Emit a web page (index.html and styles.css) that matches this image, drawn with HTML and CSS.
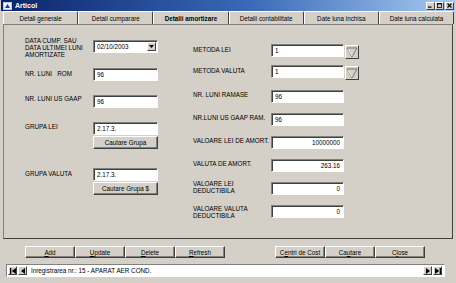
FILE: index.html
```html
<!DOCTYPE html>
<html>
<head>
<meta charset="utf-8">
<title>Articol</title>
<link rel="stylesheet" href="styles.css">
</head>
<body>
<div class="window">
  <div class="titlebar">
    <svg class="appicon" width="9" height="8" viewBox="0 0 9 8">
      <rect x="0.5" y="0.5" width="8" height="7" fill="#e8f0ff" stroke="#c0c8d8"/>
      <path d="M2 6 L4.5 2 L7 6 Z" fill="#1c3c8c"/>
      <rect x="1.5" y="1" width="2" height="2" fill="#ffffff"/>
    </svg>
    <span class="title">Articol</span>
    <div class="wincontrols">
      <span class="wbtn"><svg width="5" height="5" viewBox="0 0 5 5"><rect x="0" y="3.5" width="3.5" height="1.2" fill="#000"/></svg></span>
      <span class="wbtn"><svg width="5" height="5" viewBox="0 0 5 5"><rect x="0.5" y="0.5" width="4" height="4" fill="none" stroke="#000" stroke-width="0.8"/><rect x="0.5" y="0.4" width="4" height="1" fill="#000"/></svg></span>
      <span class="wbtn wbtn-close"><svg width="5" height="5" viewBox="0 0 5 5"><path d="M0.5 0.5 L4.5 4.5 M4.5 0.5 L0.5 4.5" stroke="#000" stroke-width="1.1"/></svg></span>
    </div>
  </div>

  <div class="tabs">
    <div class="tab">Detali generale</div>
    <div class="tab">Detali cumparare</div>
    <div class="tab active">Detalii amortizare</div>
    <div class="tab">Detalii contabilitate</div>
    <div class="tab">Date luna inchisa</div>
    <div class="tab">Date luna calculata</div>
  </div>

  <div class="page">
    <div class="col col-left">
      <div class="row">
        <div class="lbl lbl-left">DATA CUMP. SAU<br>DATA ULTIMEI LUNI<br>AMORTIZATE</div>
        <div class="combo combo-date">
          <span class="combo-val">02/10/2003</span>
          <span class="combo-btn"><svg width="5" height="3" viewBox="0 0 5 3"><path d="M0 0 H5 L2.5 3 Z" fill="#000"/></svg></span>
        </div>
      </div>
      <div class="row row-gap-10">
        <div class="lbl lbl-left lbl-off2">NR. LUNI &nbsp; ROM</div>
        <div class="field field-left">96</div>
      </div>
      <div class="row row-gap-14">
        <div class="lbl lbl-left">NR. LUNI US GAAP</div>
        <div class="field field-left">96</div>
      </div>
      <div class="row row-gap-14">
        <div class="lbl lbl-left lbl-off1">GRUPA LEI</div>
        <div class="stack">
          <div class="field field-left">2.17.3.</div>
          <button class="btn btn-search">Cautare Grupa</button>
        </div>
      </div>
      <div class="row row-gap-19">
        <div class="lbl lbl-left lbl-off2">GRUPA VALUTA</div>
        <div class="stack">
          <div class="field field-left">2.17.3.</div>
          <button class="btn btn-search">Cautare Grupa $</button>
        </div>
      </div>
    </div>

    <div class="col col-right">
      <div class="row">
        <div class="lbl lbl-right lbl-off2">METODA LEI</div>
        <div class="field field-right">1</div>
        <span class="dropbtn"><svg width="12" height="11" viewBox="0 0 12 11"><path d="M1 1 H11 L6 10 Z" fill="none" stroke="#7a7a7a" stroke-width="1"/><path d="M1.8 1.8 L6 9" stroke="#fff" stroke-width="0.8"/></svg></span>
      </div>
      <div class="row row-gap-6">
        <div class="lbl lbl-right lbl-off2">METODA VALUTA</div>
        <div class="field field-right">1</div>
        <span class="dropbtn"><svg width="12" height="11" viewBox="0 0 12 11"><path d="M1 1 H11 L6 10 Z" fill="none" stroke="#7a7a7a" stroke-width="1"/><path d="M1.8 1.8 L6 9" stroke="#fff" stroke-width="0.8"/></svg></span>
      </div>
      <div class="row row-gap-10">
        <div class="lbl lbl-right lbl-off1">NR. LUNI RAMASE</div>
        <div class="field field-right">96</div>
      </div>
      <div class="row row-gap-10">
        <div class="lbl lbl-right lbl-off1">NR.LUNI US GAAP RAM.</div>
        <div class="field field-right">96</div>
      </div>
      <div class="row row-gap-10">
        <div class="lbl lbl-right lbl-off1">VALOARE LEI DE AMORT.</div>
        <div class="field field-right num">10000000</div>
      </div>
      <div class="row row-gap-10">
        <div class="lbl lbl-right lbl-off1">VALUTA DE AMORT.</div>
        <div class="field field-right num">263.16</div>
      </div>
      <div class="row row-gap-10">
        <div class="lbl lbl-right lbl-up1">VALOARE LEI<br>DEDUCTIBILA</div>
        <div class="field field-right num">0</div>
      </div>
      <div class="row row-gap-10">
        <div class="lbl lbl-right">VALOARE VALUTA<br>DEDUCTIBILA</div>
        <div class="field field-right num">0</div>
      </div>
    </div>
  </div>

  <div class="actions">
    <div class="btngroup">
      <button class="btn btn-action"><u>A</u>dd</button>
      <button class="btn btn-action"><u>U</u>pdate</button>
      <button class="btn btn-action"><u>D</u>elete</button>
      <button class="btn btn-action"><u>R</u>efresh</button>
    </div>
    <div class="btngroup">
      <button class="btn btn-action">C<u>e</u>ntri de Cost</button>
      <button class="btn btn-action">Ca<u>u</u>tare</button>
      <button class="btn btn-action">C<u>l</u>ose</button>
    </div>
  </div>

  <div class="nav">
    <span class="navbtn"><svg width="6" height="6" viewBox="0 0 6 6"><rect x="0" y="0" width="1.3" height="6" fill="#000"/><path d="M6 0 V6 L1.8 3 Z" fill="#000"/></svg></span>
    <span class="navbtn"><svg width="6" height="6" viewBox="0 0 6 6"><path d="M5 0 V6 L1 3 Z" fill="#000"/></svg></span>
    <div class="navfield">Inregistrarea nr.: 15 - APARAT AER COND.</div>
    <span class="navbtn"><svg width="6" height="6" viewBox="0 0 6 6"><path d="M1 0 V6 L5 3 Z" fill="#000"/></svg></span>
    <span class="navbtn"><svg width="6" height="6" viewBox="0 0 6 6"><path d="M0 0 V6 L4.2 3 Z" fill="#000"/><rect x="4.7" y="0" width="1.3" height="6" fill="#000"/></svg></span>
  </div>
</div>
</body>
</html>
```

FILE: styles.css
```css
* {
  box-sizing: border-box;
  margin: 0;
  padding: 0;
}

html, body {
  width: 456px;
  height: 283px;
  overflow: hidden;
}

body {
  background: #d4d0c8;
  font-family: "Liberation Sans", Arial, sans-serif;
  font-size: 6.3px;
  color: #000;
}

.window {
  width: 456px;
  height: 283px;
  display: flex;
  flex-direction: column;
  background: #d4d0c8;
}

/* Title bar */
.titlebar {
  height: 11px;
  margin: 0 1px;
  padding-left: 2px;
  display: flex;
  align-items: center;
  background: linear-gradient(90deg, #0a246a 0%, #3a6ab8 55%, #a6caf0 100%);
}

.appicon {
  display: block;
}

.title {
  margin-left: 3px;
  color: #fff;
  font-weight: bold;
  font-size: 7px;
}

.wincontrols {
  margin-left: auto;
  margin-right: 1px;
  display: flex;
  gap: 0;
}

.wbtn {
  width: 9px;
  height: 8px;
  display: flex;
  align-items: center;
  justify-content: center;
  background: #d4d0c8;
  border: 1px solid;
  border-color: #fff #404040 #404040 #fff;
}

.wbtn-close {
  margin-left: 1px;
}

.wbtn svg {
  display: block;
}

/* Tabs */
.tabs {
  height: 13px;
  margin: 0 2px 0 3px;
  display: flex;
}

.tab {
  flex: 1;
  display: flex;
  align-items: center;
  justify-content: center;
  border: 1px solid;
  border-bottom: none;
  border-color: #fff #404040 transparent #fff;
  border-radius: 2px 2px 0 0;
  white-space: nowrap;
}

.tab.active {
  font-weight: bold;
}

/* Page */
.page {
  height: 215px;
  margin: 0 3px 0 3px;
  border: 1px solid;
  border-color: #808080 #404040 #404040 #808080;
  display: flex;
  align-items: flex-start;
  gap: 35px;
  padding-left: 21px;
}

.col {
  display: flex;
  flex-direction: column;
}

.col-left {
  width: 133px;
  padding-top: 12px;
}

.col-right {
  padding-top: 19px;
}

.row {
  display: flex;
  align-items: flex-start;
}

.row-gap-6 { margin-top: 6px; }
.row-gap-10 { margin-top: 10px; }
.row-gap-14 { margin-top: 14px; }
.row-gap-19 { margin-top: 19px; }

.lbl {
  line-height: 7px;
  white-space: nowrap;
}

.lbl-left { width: 68px; }
.lbl-right { width: 78px; }
.lbl-off1 { margin-top: 1px; }
.lbl-off2 { margin-top: 2px; }
.lbl-up1 { margin-top: -2px; }

/* Inputs */
.field {
  height: 13px;
  background: #fff;
  border: 1px solid;
  border-color: #808080 #fff #fff #808080;
  box-shadow: inset 1px 1px 0 #404040;
  padding: 0 2px 0 3px;
  display: flex;
  align-items: center;
  white-space: nowrap;
}

.field-left { width: 65px; }
.field-right { width: 73px; }

.field.num {
  justify-content: flex-end;
  padding-right: 3px;
}

.stack {
  display: flex;
  flex-direction: column;
  gap: 1px;
}

.combo {
  width: 65px;
  height: 13px;
  margin-top: 3px;
  background: #fff;
  border: 1px solid;
  border-color: #808080 #fff #fff #808080;
  box-shadow: inset 1px 1px 0 #404040;
  display: flex;
  align-items: center;
  padding: 1px 1px 1px 3px;
}

.combo-val {
  flex: 1;
}

.combo-btn {
  width: 9px;
  height: 9px;
  background: #d4d0c8;
  border: 1px solid;
  border-color: #fff #404040 #404040 #fff;
  display: flex;
  align-items: center;
  justify-content: center;
}

.combo-btn svg {
  display: block;
}

.dropbtn {
  width: 14px;
  height: 14px;
  margin-left: 1px;
  margin-top: 1px;
  background: #d4d0c8;
  border: 1px solid;
  border-color: #fff #404040 #404040 #fff;
  display: flex;
  align-items: center;
  justify-content: center;
}

.dropbtn svg {
  display: block;
}

/* Buttons */
.btn {
  height: 13px;
  background: #d4d0c8;
  border: 1px solid;
  border-color: #fff #404040 #404040 #fff;
  box-shadow: inset -1px -1px 0 #808080;
  font-family: inherit;
  font-size: 6.3px;
  color: #000;
  display: flex;
  align-items: center;
  justify-content: center;
  white-space: nowrap;
}

.btn-search {
  width: 65px;
}

.btn-action {
  width: 50px;
  height: 12px;
}

.actions {
  margin-top: 7px;
  padding-left: 25px;
  display: flex;
  gap: 50px;
}

.btngroup {
  display: flex;
}

/* Navigator */
.nav {
  margin: 6px 0 0 6px;
  width: 439px;
  height: 13px;
  display: flex;
  align-items: center;
  background: #fff;
  border: 1px solid;
  border-color: #808080 #fff #fff #808080;
  padding: 1px;
}

.navbtn {
  width: 9px;
  height: 9px;
  margin-right: 1px;
  background: #d4d0c8;
  border: 1px solid;
  border-color: #fff #404040 #404040 #fff;
  display: flex;
  align-items: center;
  justify-content: center;
}

.navbtn svg {
  display: block;
}

.navfield {
  flex: 1;
  padding-left: 3px;
  white-space: nowrap;
}
```
